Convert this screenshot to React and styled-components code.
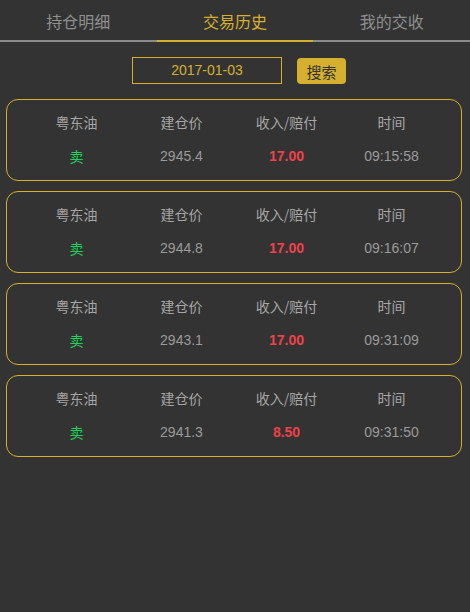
import React, { useState } from "react";
import styled, { createGlobalStyle } from "styled-components";

const GlobalStyle = createGlobalStyle`
  html, body {
    margin: 0;
    padding: 0;
    background: #333333;
  }
  body {
    font-family: "Liberation Sans", "Noto Sans CJK SC", sans-serif;
    min-height: 612px;
  }
`;

const Page = styled.div`
  background: #333333;
  min-height: 612px;
`;

const TabBar = styled.div`
  display: flex;
  border-bottom: 2px solid #8c8c8c;
`;

const Tab = styled.div`
  flex: 1;
  height: 40px;
  line-height: 42px;
  text-align: center;
  font-size: 16px;
  font-family: "Noto Sans CJK SC", sans-serif;
  color: ${(p) => (p.$active ? "#d6b02c" : "#8f8f8f")};
  margin-bottom: -2px;
  border-bottom: 2px solid ${(p) => (p.$active ? "#d6b02c" : "#8c8c8c")};
  cursor: pointer;
`;

const SearchRow = styled.div`
  display: flex;
  justify-content: center;
  align-items: center;
  gap: 15px;
  padding: 15px 0 15px 8px;
`;

const DateBox = styled.div`
  width: 148px;
  height: 25px;
  border: 1px solid #d6b02c;
  color: #d6b02c;
  font-size: 14px;
  line-height: 25px;
  text-align: center;
`;

const SearchButton = styled.button`
  width: 49px;
  height: 26px;
  border: none;
  border-radius: 4px;
  background: #d5b02e;
  color: #333;
  font-size: 15px;
  font-family: "Noto Sans CJK SC", sans-serif;
  padding: 0;
  margin-top: 1px;
`;

const List = styled.div`
  display: flex;
  flex-direction: column;
  gap: 10px;
  padding: 0 8px 0 6px;
`;

const Card = styled.div`
  border: 1px solid #d6b02c;
  border-radius: 12px;
  height: 80px;
  padding: 0 17px;
  display: grid;
  grid-template-columns: repeat(4, 1fr);
  grid-template-rows: 44px 24px;
  align-items: center;
`;

const Head = styled.div`
  text-align: center;
  font-size: 14px;
  color: #a6a6a6;
  font-family: "Noto Sans CJK SC", sans-serif;
`;

const Value = styled.div`
  text-align: center;
  font-size: 14px;
  color: ${(p) => p.$color || "#9a9a9a"};
  font-weight: ${(p) => (p.$bold ? "bold" : "normal")};
  font-family: ${(p) =>
    p.$cjk ? '"Noto Sans CJK SC", sans-serif' : '"Liberation Sans", Arial, sans-serif'};
`;

const trades = [
  { side: "卖", price: "2945.4", profit: "17.00", time: "09:15:58" },
  { side: "卖", price: "2944.8", profit: "17.00", time: "09:16:07" },
  { side: "卖", price: "2943.1", profit: "17.00", time: "09:31:09" },
  { side: "卖", price: "2941.3", profit: "8.50", time: "09:31:50" },
];

export default function App() {
  const [tab, setTab] = useState(1);
  const tabs = ["持仓明细", "交易历史", "我的交收"];

  return (
    <Page>
      <GlobalStyle />
      <TabBar>
        {tabs.map((t, i) => (
          <Tab key={t} $active={tab === i} onClick={() => setTab(i)}>
            {t}
          </Tab>
        ))}
      </TabBar>
      <SearchRow>
        <DateBox>2017-01-03</DateBox>
        <SearchButton>搜索</SearchButton>
      </SearchRow>
      <List>
        {trades.map((t, i) => (
          <Card key={i}>
            <Head>粤东油</Head>
            <Head>建仓价</Head>
            <Head>收入/赔付</Head>
            <Head>时间</Head>
            <Value $color="#1fd25b" $cjk>
              {t.side}
            </Value>
            <Value>{t.price}</Value>
            <Value $color="#f0414a" $bold>
              {t.profit}
            </Value>
            <Value>{t.time}</Value>
          </Card>
        ))}
      </List>
    </Page>
  );
}
